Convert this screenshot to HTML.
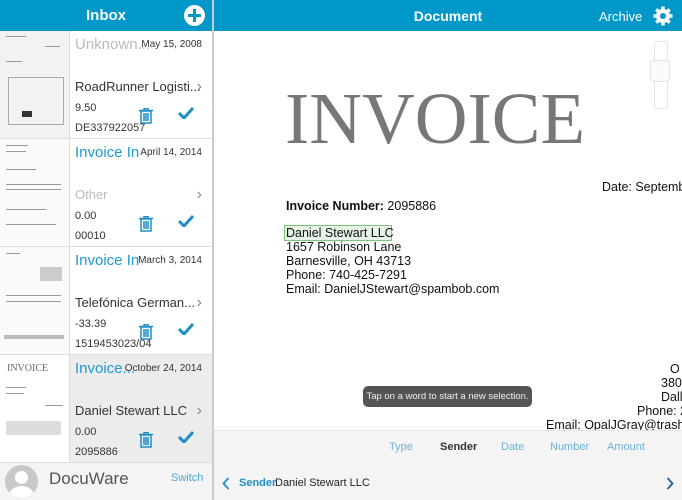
<!DOCTYPE html>
<html><head><meta charset="utf-8"><style>
*{margin:0;padding:0;box-sizing:border-box}
body{width:682px;height:500px;overflow:hidden;font-family:"Liberation Sans",sans-serif;background:#fff;position:relative}
.hdr{position:absolute;top:0;height:31px;background:#0097c9;color:#fff}
.row{position:absolute;left:0;width:212px;height:108px;border-bottom:1px solid #ddd;background:#fff}
.thumb{position:absolute;left:0;top:0;width:70px;height:107px;background:#fafafa;border-right:1px solid #ddd;overflow:hidden}
.thumb i{position:absolute;height:1px;background:#999;display:block}
.t1{position:absolute;left:75px;top:5px;font-size:15px;color:#bbb;white-space:nowrap}
.dt{position:absolute;right:10px;top:8px;font-size:10px;color:#333}
.t2{position:absolute;left:75px;top:48px;font-size:13px;color:#333;white-space:nowrap}
.chev{position:absolute;right:10px;top:47px;font-size:16px;color:#888}
.l3{position:absolute;left:75px;top:71px;font-size:11px;color:#333}
.l4{position:absolute;left:75px;top:91px;font-size:11px;color:#333}
.trash{position:absolute;left:139px;top:77px}
.chk{position:absolute;left:178px;top:76px}
.doc{position:absolute;left:214px;top:31px;width:468px;height:399px;background:#fff;overflow:hidden}
.dtxt{position:absolute;font-size:12.5px;color:#111;white-space:nowrap}
</style></head><body>
<div class="hdr" style="left:0;width:212px"><div style="position:absolute;left:0;width:212px;text-align:center;top:7px;font-size:15px;font-weight:bold">Inbox</div>
<div style="position:absolute;left:184px;top:5px;width:21px;height:21px;border-radius:50%;background:#fff"><div style="position:absolute;left:9px;top:4px;width:3px;height:13px;background:#0097c9"></div><div style="position:absolute;left:4px;top:9px;width:13px;height:3px;background:#0097c9"></div></div></div>
<div style="position:absolute;left:212px;top:0;width:2px;height:500px;background:#ccc"></div>
<div class="hdr" style="left:214px;width:468px"><div style="position:absolute;left:0;width:468px;text-align:center;top:8px;font-size:14px;font-weight:bold">Document</div>
<div style="position:absolute;left:385px;top:9px;font-size:13px">Archive</div>
<svg style="position:absolute;left:439px;top:6px" width="20" height="20" viewBox="0 0 20 20"><g fill="#fff"><circle cx="10" cy="10" r="7"/><g stroke="#fff" stroke-width="3.4"><line x1="10" y1="0.5" x2="10" y2="19.5"/><line x1="0.5" y1="10" x2="19.5" y2="10"/><line x1="3.3" y1="3.3" x2="16.7" y2="16.7"/><line x1="16.7" y1="3.3" x2="3.3" y2="16.7"/></g></g><circle cx="10" cy="10" r="3" fill="#0097c9"/></svg></div>

<!-- rows -->
<div class="row" style="top:31px"><div class="thumb" style="background:#f2f2f2"><i style="left:6px;top:5px;width:20px"></i><i style="left:6px;top:30px;width:16px"></i><i style="left:45px;top:15px;width:15px"></i><i style="left:8px;top:46px;width:56px;height:48px;background:none;border:1px solid #aaa"></i><i style="left:22px;top:80px;width:10px;height:6px;background:#333"></i></div>
<div class="t1">Unknown...</div><div class="dt">May 15, 2008</div><div class="t2">RoadRunner Logisti...</div><div class="chev">&#x203A;</div><div class="l3">9.50</div><div class="l4">DE337922057</div>
<svg class="trash" width="14" height="16"><g fill="none" stroke="#1e8fc6" stroke-width="1.5"><rect x="2" y="3" width="10" height="12"/><line x1="0" y1="2.5" x2="14" y2="2.5"/><line x1="5" y1="5" x2="5" y2="13"/><line x1="7" y1="5" x2="7" y2="13"/><line x1="9" y1="5" x2="9" y2="13"/><rect x="5" y="0.5" width="4" height="2"/></g></svg>
<svg class="chk" width="16" height="12"><path d="M1 6 L6 11 L15 1" fill="none" stroke="#1e8fc6" stroke-width="3"/></svg></div>

<div class="row" style="top:139px"><div class="thumb"><i style="left:6px;top:6px;width:22px"></i><i style="left:6px;top:12px;width:20px"></i><i style="left:6px;top:30px;width:30px"></i><i style="left:6px;top:45px;width:55px"></i><i style="left:6px;top:50px;width:55px"></i><i style="left:6px;top:70px;width:40px"></i><i style="left:6px;top:85px;width:50px"></i></div>
<div class="t1" style="color:#1e9ad2">Invoice In</div><div class="dt">April 14, 2014</div><div class="t2" style="color:#bbb">Other</div><div class="chev">&#x203A;</div><div class="l3">0.00</div><div class="l4">00010</div>
<svg class="trash" width="14" height="16"><g fill="none" stroke="#1e8fc6" stroke-width="1.5"><rect x="2" y="3" width="10" height="12"/><line x1="0" y1="2.5" x2="14" y2="2.5"/><line x1="5" y1="5" x2="5" y2="13"/><line x1="7" y1="5" x2="7" y2="13"/><line x1="9" y1="5" x2="9" y2="13"/><rect x="5" y="0.5" width="4" height="2"/></g></svg>
<svg class="chk" width="16" height="12"><path d="M1 6 L6 11 L15 1" fill="none" stroke="#1e8fc6" stroke-width="3"/></svg></div>

<div class="row" style="top:247px"><div class="thumb"><i style="left:6px;top:6px;width:14px"></i><i style="left:40px;top:20px;width:22px;height:14px;background:#ccc"></i><i style="left:6px;top:48px;width:55px"></i><i style="left:6px;top:54px;width:55px"></i><i style="left:4px;top:88px;width:60px;height:4px;background:#bbb"></i></div>
<div class="t1" style="color:#1e9ad2">Invoice In</div><div class="dt">March 3, 2014</div><div class="t2">Telefónica German...</div><div class="chev">&#x203A;</div><div class="l3">-33.39</div><div class="l4">1519453023/04</div>
<svg class="trash" width="14" height="16"><g fill="none" stroke="#1e8fc6" stroke-width="1.5"><rect x="2" y="3" width="10" height="12"/><line x1="0" y1="2.5" x2="14" y2="2.5"/><line x1="5" y1="5" x2="5" y2="13"/><line x1="7" y1="5" x2="7" y2="13"/><line x1="9" y1="5" x2="9" y2="13"/><rect x="5" y="0.5" width="4" height="2"/></g></svg>
<svg class="chk" width="16" height="12"><path d="M1 6 L6 11 L15 1" fill="none" stroke="#1e8fc6" stroke-width="3"/></svg></div>

<div class="row" style="top:355px;background:#ececec"><div class="thumb" style="background:#fff"><div style="position:absolute;left:7px;top:8px;font-family:'Liberation Serif',serif;font-size:10px;color:#666">INVOICE</div><i style="left:6px;top:32px;width:20px"></i><i style="left:6px;top:38px;width:18px"></i><i style="left:45px;top:50px;width:18px"></i><i style="left:6px;top:66px;width:55px;height:14px;background:#ddd"></i></div>
<div class="t1" style="color:#1e9ad2">Invoice...</div><div class="dt">October 24, 2014</div><div class="t2">Daniel Stewart LLC</div><div class="chev">&#x203A;</div><div class="l3">0.00</div><div class="l4">2095886</div>
<svg class="trash" width="14" height="16"><g fill="none" stroke="#1e8fc6" stroke-width="1.5"><rect x="2" y="3" width="10" height="12"/><line x1="0" y1="2.5" x2="14" y2="2.5"/><line x1="5" y1="5" x2="5" y2="13"/><line x1="7" y1="5" x2="7" y2="13"/><line x1="9" y1="5" x2="9" y2="13"/><rect x="5" y="0.5" width="4" height="2"/></g></svg>
<svg class="chk" width="16" height="12"><path d="M1 6 L6 11 L15 1" fill="none" stroke="#1e8fc6" stroke-width="3"/></svg></div>

<div style="position:absolute;left:0;top:463px;width:212px;height:37px;background:#f4f4f4">
<div style="position:absolute;left:5px;top:2px;width:33px;height:33px;border-radius:50%;background:#c8c8c8;overflow:hidden"><div style="position:absolute;left:10px;top:6px;width:13px;height:13px;border-radius:50%;background:#fff"></div><div style="position:absolute;left:4px;top:21px;width:25px;height:20px;border-radius:50%;background:#fff"></div></div>
<div style="position:absolute;left:49px;top:6px;font-size:17px;color:#555">DocuWare</div>
<div style="position:absolute;left:171px;top:9px;font-size:11px;color:#4aa9d6">Switch</div></div>

<div class="doc">
<div style="position:absolute;left:71px;top:51px;font-family:'Liberation Serif',serif;font-size:73px;line-height:1;color:#777;white-space:nowrap">INVOICE</div>
<div style="position:absolute;left:440px;top:10px;width:14px;height:68px;border:1px solid #e4e4e4;border-radius:4px"></div>
<div style="position:absolute;left:436px;top:29px;width:20px;height:22px;border:1px solid #e4e4e4;border-radius:3px;background:#fafafa"></div>
<div class="dtxt" style="left:388px;top:149px">Date: September</div>
<div class="dtxt" style="left:72px;top:168px"><b>Invoice Number:</b> 2095886</div>
<div style="position:absolute;left:70px;top:194px;width:108px;height:16px;border:1px solid #7cc47c;background:#e6f3e6"></div>
<div class="dtxt" style="left:72px;top:195px">Daniel Stewart LLC</div>
<div class="dtxt" style="left:72px;top:209px">1657 Robinson Lane</div>
<div class="dtxt" style="left:72px;top:223px">Barnesville, OH 43713</div>
<div class="dtxt" style="left:72px;top:237px">Phone: 740-425-7291</div>
<div class="dtxt" style="left:72px;top:251px">Email: DanielJStewart@spambob.com</div>
<div class="dtxt" style="left:456px;top:331px">O</div>
<div class="dtxt" style="left:447px;top:345px">380</div>
<div class="dtxt" style="left:447px;top:359px">Dall</div>
<div class="dtxt" style="left:423px;top:373px">Phone: 2</div>
<div class="dtxt" style="left:332px;top:387px">Email: OpalJGray@trashy</div>
<div style="position:absolute;left:149px;top:355px;width:169px;height:21px;border-radius:5px;background:#555;color:#eee;font-size:9.5px;text-align:center;line-height:21px;white-space:nowrap">Tap on a word to start a new selection.</div>
</div>
<div style="position:absolute;left:214px;top:430px;width:468px;height:70px;background:#f4f4f4;border-top:1px solid #e4e4e4">
<div style="position:absolute;left:175px;top:10px;font-size:11px;color:#6bb2d8">Type</div>
<div style="position:absolute;left:226px;top:10px;font-size:11px;color:#333;font-weight:bold">Sender</div>
<div style="position:absolute;left:287px;top:10px;font-size:11px;color:#6bb2d8">Date</div>
<div style="position:absolute;left:336px;top:10px;font-size:11px;color:#6bb2d8">Number</div>
<div style="position:absolute;left:393px;top:10px;font-size:11px;color:#6bb2d8">Amount</div>
<svg style="position:absolute;left:8px;top:46px" width="8" height="13"><path d="M6.5 1 L1.5 6.5 L6.5 12" fill="none" stroke="#1e8fc6" stroke-width="1.8"/></svg>
<div style="position:absolute;left:25px;top:46px;font-size:11px;color:#1e8fc6;font-weight:bold">Sender</div>
<div style="position:absolute;left:61px;top:46px;font-size:11px;color:#222">Daniel Stewart LLC</div>
<svg style="position:absolute;left:452px;top:46px" width="8" height="13"><path d="M1.5 1 L6.5 6.5 L1.5 12" fill="none" stroke="#1e5f96" stroke-width="1.8"/></svg>
</div>
</body></html>
